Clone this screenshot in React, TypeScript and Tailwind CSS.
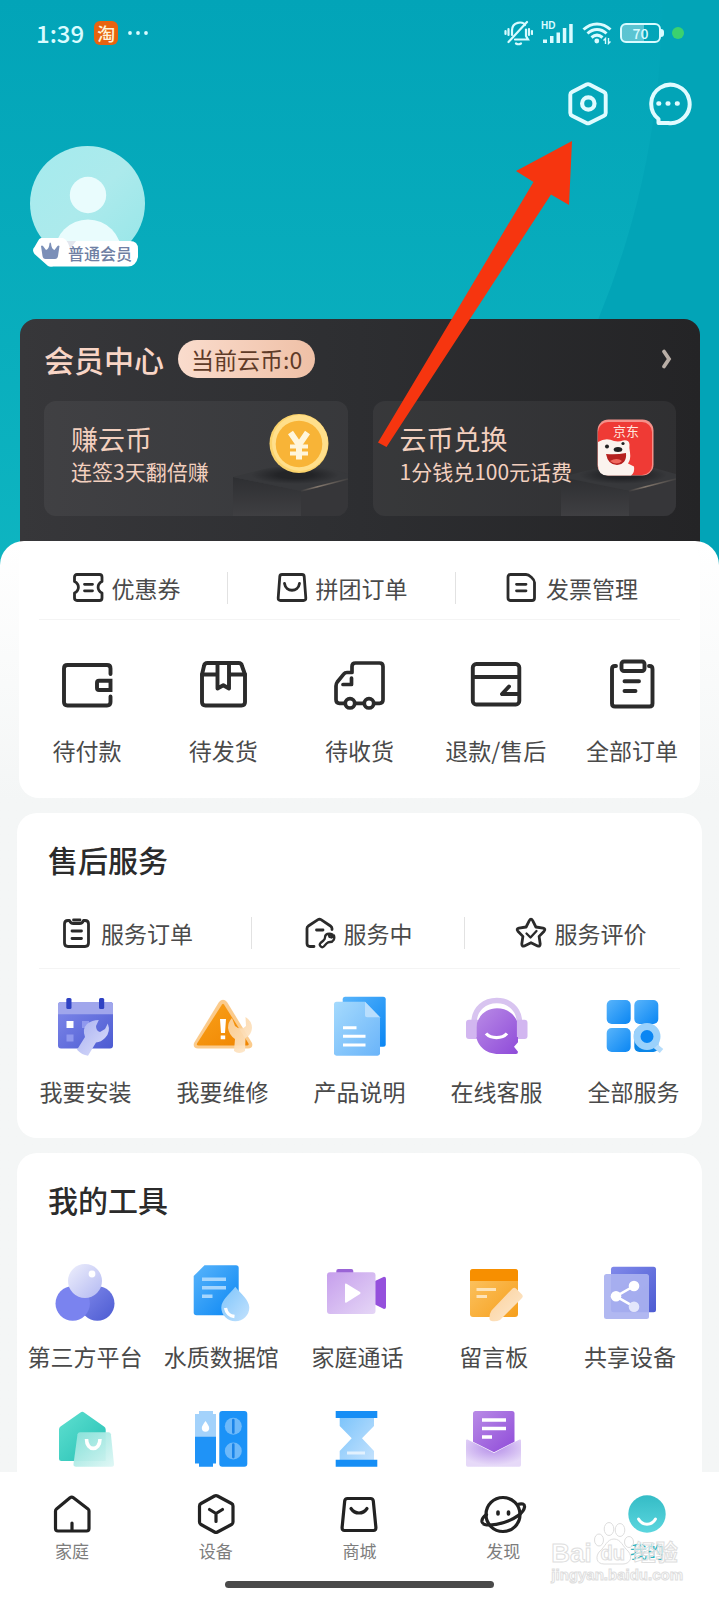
import type { ReactNode } from "react";

type Item = { label: string; icon: ReactNode };

/* ---------- 线性图标 ---------- */

function Line({ size, width, children }: { size: number; width: number; children: ReactNode }) {
  return (
    <svg
      width={size}
      height={size}
      viewBox={`0 0 ${size} ${size}`}
      fill="none"
      stroke="currentColor"
      strokeWidth={width}
      strokeLinecap="round"
      strokeLinejoin="round"
      aria-hidden="true"
    >
      {children}
    </svg>
  );
}

const orderLinks: Item[] = [
  {
    label: "优惠券",
    icon: (
      <Line size={32} width={2.8}>
        <path d="M5 2.5h22.5q2.5 0 2.5 2.5v4.6c-5.2 2.6-5.2 8.900 0 11.500V26q0 2.500-2.500 2.500H5Q2.500 28.500 2.500 26v-4.900c5.200-2.600 5.200-8.900 0-11.500V5Q2.500 2.500 5 2.500z" />
        <path d="M12.500 12.300h8M12.500 18.800h8" />
      </Line>
    ),
  },
  {
    label: "拼团订单",
    icon: (
      <Line size={32} width={2.8}>
        <path d="M6 2.500h20q2 0 2.200 2l1.600 21.500q.1 2.500-2.300 2.500H4.500q-2.400 0-2.300-2.500L3.800 4.500q.2-2 2.200-2z" />
        <path d="M8.500 11.500c1.500 9 13.500 9 15 0" />
      </Line>
    ),
  },
  {
    label: "发票管理",
    icon: (
      <Line size={32} width={2.8}>
        <path d="M4.500 2.500h15.500c3 0 8.500 4.500 8.500 8V26q0 2.500-2.500 2.500H4.500Q2 28.500 2 26V5q0-2.500 2.500-2.500z" />
        <path d="M10.500 12.300h9.500M10.500 18.800h9.500" />
      </Line>
    ),
  },
];

const orderStates: Item[] = [
  {
    label: "待付款",
    icon: (
      <Line size={56} width={3.9}>
        <path d="M51.500 18V12.500q0-3.500-3.500-3.500H8.500Q5 9 5 12.500v33.500q0 3.500 3.500 3.500H48q3.500 0 3.500-3.500v-5.500" />
        <path d="M51.500 24.800H40q-2 0-2 2V32q0 2 2 2h11.500z" strokeLinejoin="miter" />
      </Line>
    ),
  },
  {
    label: "待发货",
    icon: (
      <Line size={56} width={3.9}>
        <path d="M12.500 7h31q3 0 3.500 3l3 8.500V46q0 3.500-3.500 3.500h-36Q7 49.500 7 46V18.500L9 10q.5-3 3.500-3z" />
        <path d="M7 18.500h15.500M34 18.500h16M22.500 7v25.500l5.800-3.300 5.700 3.300V7" />
      </Line>
    ),
  },
  {
    label: "待收货",
    icon: (
      <Line size={56} width={3.7}>
        <path d="M25 47.300h7.500M43.500 47.300H48.500q3.500 0 3.500-3.500V10.500Q52 7 48.500 7h-24Q21 7 21 10.500V16.500h-5q-2 0-3.300 1.700L6.300 26Q5 27.700 5 30v13.500q0 3.800 3.500 3.800h4.500" />
        <circle cx="19" cy="47.300" r="4.700" />
        <circle cx="38" cy="47.300" r="4.700" />
        <path d="M20.500 22v6.500h-8.500" />
      </Line>
    ),
  },
  {
    label: "退款/售后",
    icon: (
      <Line size={56} width={3.9}>
        <rect x="4.800" y="8" width="46.500" height="40.500" rx="3.500" />
        <path d="M5 21h46M41 30.500L34 38h17" />
      </Line>
    ),
  },
  {
    label: "全部订单",
    icon: (
      <Line size={56} width={3.9}>
        <path d="M12 10H11Q8 10 8 13v34.500Q8 50.500 11 50.500h34.500q3 0 3-3V13q0-3-3-3H45" />
        <rect x="17.500" y="5.500" width="23" height="9.500" rx="2.500" />
        <path d="M20.500 25.300h14.500M20.500 35h11" />
      </Line>
    ),
  },
];

const serviceLinks: Item[] = [
  {
    label: "服务订单",
    icon: (
      <Line size={32} width={2.8}>
        <path d="M8.500 3.500H7Q3.500 3.500 3.500 7v19q0 3.500 3.500 3.500h17q3.500 0 3.500-3.500V7q0-3.500-3.500-3.500h-1.500c-1 3-2.500 3-4 3h-6c-1.500 0-3 0-4-3z" />
        <path d="M12.500 3h6.500M11 14h9.500M11 21.500h9.500" />
      </Line>
    ),
  },
  {
    label: "服务中",
    icon: (
      <Line size={32} width={2.8}>
        <path d="M10 29.500H6Q3 29.500 3 26.500V11.500Q3 10 4.300 9L14 2.700q1.500-1 3 0L26.500 9Q28 10 28 11.500V12.500M12.500 13h6.500" />
        <path d="M28.500 17.500c-3.500-2-7.500-.5-7.500 3 0 1.300-.5 2-1.500 3l-3 2.500c-2 2 1 5.500 3.300 3.500l2.700-3c1-1 2-1.500 3.500-1.500 3.500 0 5-3.500 4-6.500l-2.500 2-2-.500-.500-1.500z" strokeWidth="2.300" />
      </Line>
    ),
  },
  {
    label: "服务评价",
    icon: (
      <Line size={32} width={2.8}>
        <path d="M14.300 3.600q1.700-2.900 3.400 0l3.200 6.400 7.200 1.200q2.900.7 1 3l-5 5.200 1.100 7.500q.1 2.900-2.600 2l-6.600-3.200-6.600 3.200q-2.700.9-2.600-2l1.100-7.500-5-5.200q-1.900-2.300 1-3l7.200-1.200z" />
        <path d="M11.500 16.500l4 4 6-6.500" strokeWidth="2.300" />
      </Line>
    ),
  },
];

const tabs: Item[] = [
  {
    label: "家庭",
    icon: (
      <Line size={48} width={3.2}>
        <path d="M22 7.800q1.700-1.300 3.400 0L40 19q1 .8 1 2v17.500q0 2.500-2.500 2.500H10q-2.500 0-2.500-2.500V21q0-1.200 1-2z" />
        <path d="M24 33v7" />
      </Line>
    ),
  },
  {
    label: "设备",
    icon: (
      <Line size={48} width={3.2}>
        <path d="M22.500 6q1.500-.8 3 0L39.500 13.500q1.500.8 1.500 2.500v16q0 1.700-1.500 2.500L25.500 42q-1.500.8-3 0L9 34.500Q7.500 33.700 7.500 32V16q0-1.700 1.500-2.500z" />
        <path d="M17.500 19.500l6.500 4 6.500-4M24 23.500V31.500" />
      </Line>
    ),
  },
  {
    label: "商城",
    icon: (
      <Line size={48} width={3.2}>
        <path d="M12.500 8.500h23q2.500 0 2.800 2.500l2.600 26.500q.1 3-2.400 3H9.500q-2.500 0-2.400-3L9.700 11q.3-2.500 2.800-2.500z" />
        <path d="M16 18.500c4 6 12 6 16 0" />
      </Line>
    ),
  },
  {
    label: "发现",
    icon: (
      <Line size={48} width={3.2}>
        <circle cx="24" cy="24.500" r="17" />
        <path d="M38.500 14.500c4.500-1.500 7.500-.5 7 2.700-.8 5.800-10.500 12.300-20.500 15.300S4 36.300 3 32c-.5-3 1.500-5.300 4.500-7.300" />
        <path d="M19 22v2M29.500 22v2" strokeWidth="3.600" />
      </Line>
    ),
  },
  {
    label: "我的",
    icon: (
      <svg width="48" height="48" viewBox="0 0 48 48" aria-hidden="true">
        <defs>
          <linearGradient id="me" x1="0" y1="0" x2="0" y2="1">
            <stop offset="0" stopColor="#35bcc6" />
            <stop offset="1" stopColor="#5bd6de" />
          </linearGradient>
        </defs>
        <circle cx="24" cy="24" r="18.700" fill="url(#me)" />
        <path d="M15.500 29c4 7 13 7 17 0" fill="none" stroke="#fff" strokeWidth="3" strokeLinecap="round" />
      </svg>
    ),
  },
];

/* ---------- 彩色图标 ---------- */

function Color({ children }: { children: ReactNode }) {
  return (
    <svg width="64" height="64" viewBox="0 0 64 64" aria-hidden="true">
      {children}
    </svg>
  );
}

function Gradients() {
  const stops: [string, string, string][] = [
    ["indigo", "#8089ea", "#4c5bd2"],
    ["lilac", "#a9b1f0", "#dcdffb"],
    ["orange", "#f9a11b", "#f08500"],
    ["amber", "#fcc566", "#f69f1c"],
    ["peach", "#fbd09a", "#fde9cf"],
    ["blue", "#58b4fb", "#0a86f3"],
    ["sky", "#7cc4fb", "#c4e2fd"],
    ["page", "#a5dafd", "#6ab4f9"],
    ["violet", "#b98be6", "#8f4bd9"],
    ["mauve", "#c69fec", "#e5d6f6"],
    ["mint", "#5fe0d0", "#25bfb4"],
    ["foam", "#8ae2da", "#dff7f5"],
    ["pearl", "#eeeffc", "#b3b9f2"],
  ];
  return (
    <svg width="0" height="0" className="absolute" aria-hidden="true">
      <defs>
        {stops.map(([id, from, to]) => (
          <linearGradient key={id} id={id} x1="0" y1="0" x2="1" y2="1">
            <stop offset="0" stopColor={from} />
            <stop offset="1" stopColor={to} />
          </linearGradient>
        ))}
        <radialGradient id="glow" cx="0.5" cy="0.3" r="0.65">
          <stop offset="0" stopColor="#b48de8" />
          <stop offset="1" stopColor="#e6d9f8" />
        </radialGradient>
      </defs>
    </svg>
  );
}

const services: Item[] = [
  {
    label: "我要安装",
    icon: (
      <Color>
        <rect x="4" y="7" width="55" height="46.500" rx="3" fill="url(#indigo)" />
        <path d="M7 7h49q3 0 3 3v9.300H4V10q0-3 3-3z" fill="#a0a6ec" />
        <rect x="12.300" y="3" width="5.200" height="11" rx="1.500" fill="#2f42c3" />
        <rect x="45" y="3" width="5.200" height="11" rx="1.500" fill="#2f42c3" />
        <path d="M12.500 26h7v7h-7z" fill="#fff" />
        <path d="M28 26h7v7h-7zM12.500 39.500h7v7h-7z" fill="#8f98ee" />
        <path
          d="M44.800 25L42 31q0 5 4 6l5-3 2.800-5.500Q57 37 51 43q-4 4-9 4.500L34 60.700Q28 60 23 54.700L31 42q-3-8 2-13 5-4 11.800-4z"
          fill="url(#lilac)"
        />
      </Color>
    ),
  },
  {
    label: "我要维修",
    icon: (
      <Color>
        <path d="M28 7q4-4.500 8 0l25 41q1.500 5.500-4 5.500H7q-5.500 0-4-5.500z" fill="#fbcb8c" />
        <path d="M31 9.500q1-1.300 2 0l24.500 39q.5 2-1.500 2H7.500q-2 0-1.500-2z" fill="url(#orange)" />
        <path d="M29 24h6l-1 14h-4zM29.700 40.500h4.500v3.700h-4.500z" fill="#fff" />
        <path
          d="M41 23q-4 4-4 10 1 7 7 11l-1 12q5 4 11 0l.5-13q6-3 6.500-10 0-7-6.500-11l.5 9q-5 5-11 0z"
          fill="url(#peach)"
          opacity="0.93"
        />
      </Color>
    ),
  },
  {
    label: "产品说明",
    icon: (
      <Color>
        <rect x="14.700" y="1.700" width="43" height="50" rx="2.500" fill="url(#blue)" />
        <path d="M8.500 6.700H37l15 15.600v36q0 2.400-2.500 2.400h-41Q6 60.700 6 58.300V9.200q0-2.500 2.500-2.500z" fill="url(#page)" />
        <path d="M37 6.700v13q0 2.600 2.500 2.600H52z" fill="#b9defd" />
        <path d="M15 32.700h13.500M15 41.300h22.500M15 50h22.500" stroke="#fff" strokeWidth="3" />
      </Color>
    ),
  },
  {
    label: "在线客服",
    icon: (
      <Color>
        <path d="M9 28C9-2 54.500-2 54.500 28" fill="none" stroke="#d8c4f0" strokeWidth="5.500" />
        <rect x="1" y="24.700" width="14" height="19.300" rx="3" fill="#d2b6f0" />
        <rect x="48.500" y="24.700" width="14" height="19.300" rx="3" fill="#d2b6f0" />
        <path d="M32 13.300c12 0 21 8 21 20v14l-4 4.500 4 5q0 2.200-2 2.200H34c-14 0-23.300-9-23.300-22.500 0-14 9.300-23.200 21.300-23.200z" fill="url(#violet)" />
        <path d="M10.700 27v15M52.900 27v15" stroke="#d2b6f0" strokeWidth="2" />
        <path d="M21 38.500c5 5.500 16 5.500 21 0" fill="none" stroke="#fff" strokeWidth="3.300" />
      </Color>
    ),
  },
  {
    label: "全部服务",
    icon: (
      <Color>
        <rect x="4.700" y="5" width="24" height="24" rx="5" fill="url(#blue)" />
        <rect x="32.300" y="5" width="24" height="24" rx="5" fill="url(#blue)" />
        <rect x="4.700" y="33" width="24" height="24" rx="5" fill="url(#blue)" />
        <rect x="32.300" y="33" width="24" height="24" rx="5" fill="#0a86e8" />
        <path d="M51 49l8.500 7" stroke="#b5dcfb" strokeWidth="5.500" />
        <circle cx="45" cy="41.500" r="10" fill="#0a86f3" stroke="#9ad1fb" strokeWidth="7" />
      </Color>
    ),
  },
];

const tools: Item[] = [
  {
    label: "第三方平台",
    icon: (
      <Color>
        <circle cx="44.300" cy="43.500" r="17.200" fill="url(#indigo)" />
        <circle cx="19.700" cy="43.500" r="17.200" fill="#7a83ef" />
        <circle cx="32" cy="21" r="17" fill="url(#pearl)" />
        <circle cx="39" cy="14" r="3.400" fill="#fff" />
      </Color>
    ),
  },
  {
    label: "水质数据馆",
    icon: (
      <Color>
        <path d="M15.500 5.300H47q2.700 0 2.700 2.700v44.500q0 2.800-2.700 2.800H7.500q-2.800 0-2.800-2.800V16z" fill="url(#blue)" />
        <path d="M13 19.300h24M13 27.700h24M13 36.300h10.500" stroke="#a6d6fd" strokeWidth="3.600" />
        <path d="M46.300 26.700C52 34 60.300 40 60.300 47.500a14 13.700 0 0 1-28 0c0-7.500 8.500-13.500 14-20.800z" fill="url(#sky)" />
        <path d="M36.500 48c1 5 4 8 9 8.500" fill="none" stroke="#fff" strokeWidth="3.300" />
      </Color>
    ),
  },
  {
    label: "家庭通话",
    icon: (
      <Color>
        <rect x="11.300" y="9" width="17" height="6" rx="2" fill="#9a64d6" />
        <path d="M50 21l9-4.300q2 0 2 2V47q0 2-2 2l-9-4.500z" fill="#9550dc" />
        <rect x="2" y="12.300" width="48.500" height="41.700" rx="3" fill="url(#mauve)" />
        <path d="M20 24.500q0-1.500 1.500-.7L35 32q1.200 1 0 2L21.500 42.500q-1.500.7-1.500-1z" fill="#fff" />
      </Color>
    ),
  },
  {
    label: "留言板",
    icon: (
      <Color>
        <rect x="8" y="9" width="48" height="48" rx="3" fill="url(#amber)" />
        <path d="M11 9h42q3 0 3 3v9H8v-9q0-3 3-3z" fill="#f78f00" />
        <path d="M14.500 29.500h19.500M14.500 36.500h10.500" stroke="#fde3b8" strokeWidth="3.200" />
        <path d="M50.500 28.500q1.800-1.600 3.500 0l6 6q1.500 1.800 0 3.500L38 60q-4 2-8.500 1-2.500-.5-2-3.500 0-4 2-7z" fill="url(#peach)" />
      </Color>
    ),
  },
  {
    label: "共享设备",
    icon: (
      <Color>
        <rect x="13" y="6.700" width="45" height="45.500" rx="2.500" fill="url(#indigo)" />
        <rect x="6" y="14" width="45" height="45" rx="2.500" fill="#aab2f0" opacity="0.92" />
        <path d="M18 36.300L36 26M18 36.300l18 10.400" stroke="#fff" strokeWidth="2.500" />
        <circle cx="36" cy="26" r="5.300" fill="#fff" />
        <circle cx="18" cy="36.300" r="5.300" fill="#fff" />
        <circle cx="36" cy="46.700" r="5.300" fill="#e3e6fb" />
      </Color>
    ),
  },
];

const moreTools: Item[] = [
  {
    label: "智家商城",
    icon: (
      <Color>
        <path d="M27.500 5.500q1.800-1.500 3.600 0L51 19.500q1.700 1.200 1.700 3V54H8.500Q6 54 6 51.500V22.500q0-2 1.500-3z" fill="url(#mint)" />
        <path d="M27 25.300h28.500q2 0 2.400 2L61 57q.2 2.700-2.300 2.700H23q-2.800 0-2.500-2.700L24.500 27.300q.5-2 2.500-2z" fill="url(#foam)" opacity="0.95" />
        <path d="M33.500 32c0 12.500 13.500 12.500 13.500 0" fill="none" stroke="#fff" strokeWidth="3.600" />
      </Color>
    ),
  },
  {
    label: "滤芯管理",
    icon: (
      <Color>
        <path d="M10 4h14v3h3v23H6V7h4z" fill="#a3d2fb" />
        <path d="M6 29.700h21V56.500h-3v3.200H10V56.500H6z" fill="#1f93f7" />
        <path d="M16.500 14c2 3 3.700 5 3.700 7a3.700 3.700 0 0 1-7.400 0c0-2 1.700-4 3.700-7z" fill="#fff" />
        <rect x="30.300" y="4" width="28" height="55.700" rx="3" fill="#1b92f7" />
        <circle cx="44.300" cy="19.300" r="8.500" fill="#6db9fa" />
        <circle cx="44.300" cy="43.900" r="8.500" fill="#6db9fa" />
        <path d="M44.300 13v12.500M44.300 37.600v12.500" stroke="#1b84e8" strokeWidth="2.600" strokeLinecap="round" />
      </Color>
    ),
  },
  {
    label: "使用时长",
    icon: (
      <Color>
        <path d="M14.700 10H49v9L37 31.300 49 44v9H14.700v-9l12-12.700L14.700 19z" fill="url(#sky)" />
        <path d="M22 46h18" stroke="#e2f1fe" strokeWidth="3" />
        <path d="M10.700 4h41.600v7H10.700zM10.700 52.700h41.600v7H10.700z" fill="#168ef5" />
      </Color>
    ),
  },
  {
    label: "消息订阅",
    icon: (
      <Color>
        <path d="M4 33.500q0-1.500 1.500-1L32 46l25.500-13.500q1.500-.5 1.500 1V58q0 1.700-1.700 1.700H5.700Q4 59.700 4 58z" fill="url(#glow)" />
        <path d="M13.500 4H50q2.500 0 2.500 2.500V34.700L32 45.300 11 34.700V6.500Q11 4 13.500 4z" fill="url(#violet)" />
        <path d="M20 13h24M20 21.500h24M20 30h10" stroke="#fff" strokeWidth="3.600" />
      </Color>
    ),
  },
];

/* ---------- 头部 ---------- */

function Backdrop() {
  return (
    <svg
      className="absolute left-0 top-0 h-[580px] w-full"
      viewBox="0 0 719 580"
      preserveAspectRatio="none"
      aria-hidden="true"
    >
      <defs>
        <linearGradient id="tide" x1="0" y1="0" x2="0" y2="580" gradientUnits="userSpaceOnUse">
          <stop offset="0" stopColor="#02a4b8" />
          <stop offset="1" stopColor="#0eb5c1" />
        </linearGradient>
      </defs>
      <rect width="719" height="580" fill="#02a4b7" />
      <circle cx="-168" cy="0" r="830" fill="url(#tide)" />
    </svg>
  );
}

function StatusBar() {
  return (
    <div className="flex h-[66px] items-center justify-between pl-9 pr-[35px] text-[#d9fbff]">
      <div className="flex items-center gap-[10px]">
        <span className="text-[24px] font-medium leading-8">1:39</span>
        <span className="flex size-6 items-center justify-center rounded-md bg-[#e8630f] text-[18px] font-medium leading-6 text-[#fff3d8]">
          淘
        </span>
        <svg width="20" height="6" viewBox="0 0 20 6" fill="currentColor" aria-hidden="true">
          <circle cx="2" cy="3" r="1.900" />
          <circle cx="10" cy="3" r="1.900" />
          <circle cx="18" cy="3" r="1.900" />
        </svg>
      </div>
      <div className="flex items-center gap-2">
        <svg width="29" height="26" viewBox="0 0 29 26" fill="none" stroke="currentColor" strokeWidth="2.200" strokeLinecap="round" aria-hidden="true">
          <path d="M8 15V10.500C8 1.500 19 1 21 5M22 9.500V16l2 3.500H11M12 23.500q2.500 1.500 5 0M23 2L4.500 22M1.500 11v3M4.500 9v6M25 9v6M28 11v3" />
        </svg>
        <svg width="33" height="24" viewBox="0 0 33 24" fill="currentColor" aria-hidden="true">
          <text x="0" y="8" fontSize="10" fontWeight="700" fontFamily="Liberation Sans, sans-serif">HD</text>
          <path d="M2 18.500h4V22H2zM9 15h3.500v7H9zM15.500 11.500h3.500V22h-3.500zM21.800 7h3.500v15h-3.500zM28.200 3h3.500v19h-3.500z" />
        </svg>
        <svg width="30" height="24" viewBox="0 0 30 24" fill="none" stroke="currentColor" strokeWidth="3" aria-hidden="true">
          <path d="M1.500 8.500c8-7.500 19-7.500 27 0M5.500 12.500c5.700-5.300 13.300-5.300 19 0M9.500 16.500c3.500-3 7.500-3 11 0" />
          <circle cx="14.800" cy="20" r="2.400" fill="currentColor" stroke="none" />
          <path d="M23.500 23v-5.500l-2 2M26.500 17v5.500l2-2" strokeWidth="1.400" />
        </svg>
        <span className="flex items-center">
          <span className="flex h-5 w-[41px] items-center justify-center rounded-md border-2 border-current bg-gradient-to-r from-white/35 from-60% to-transparent to-60% text-[14px] font-medium leading-4">
            70
          </span>
          <span className="h-2 w-[3px] rounded-r-sm bg-current" />
        </span>
        <span className="size-3 rounded-full bg-[#3bd16f]" />
      </div>
    </div>
  );
}

function Profile() {
  return (
    <div className="ml-[30px] mt-[18px] flex h-[122px] w-[116px] flex-col">
      <svg width="115" height="115" viewBox="0 0 115 115" aria-label="头像" role="img">
        <defs>
          <linearGradient id="face" x1="0" y1="0" x2="1" y2="1">
            <stop offset="0" stopColor="#a5ebee" />
            <stop offset="0.500" stopColor="#aceaec" />
            <stop offset="1" stopColor="#96e6e8" />
          </linearGradient>
          <clipPath id="round">
            <circle cx="57.500" cy="57.500" r="57.500" />
          </clipPath>
        </defs>
        <g clipPath="url(#round)">
          <rect width="115" height="115" fill="url(#face)" />
          <circle cx="58" cy="49" r="18.200" fill="#e9fcfd" />
          <circle cx="58" cy="107" r="33.500" fill="#e9fcfd" />
        </g>
      </svg>
      <div className="relative -mt-[23px] ml-[3px] flex h-[29px] w-[105px] items-center">
        <svg className="absolute inset-0" width="105" height="29" viewBox="0 0 105 29" aria-hidden="true">
          <path d="M30 3h67q8 0 8 8v8q-2 9.500-10 9.500H18z" fill="#fff" />
          <path d="M32 3l11 0-9 12z" fill="#e2e6ee" />
          <path d="M8 0h22q3 1 5 5l3 8q0 3-2 5l-14 9q-4 3-7 1L1.500 16q-3-4 0-7L5 3q1-2.500 3-3z" fill="#fff" />
          <path d="M8 8q1-1 2 0l3 4q3-1 3.500-6.500.5-2 1.500 0Q18.500 11 21.500 12l3-4q1-1 2 0L25 18q-.5 3-3 3h-9.500q-2.500 0-3-3z" fill="#7b8fb8" />
        </svg>
        <span className="relative pl-[35px] text-[16px] font-medium leading-5 whitespace-nowrap text-[#6f7fa3]">普通会员</span>
      </div>
    </div>
  );
}

function Pedestal({ children }: { children: ReactNode }) {
  return (
    <svg className="absolute right-0 top-0" width="115" height="115" viewBox="0 0 115 115" aria-hidden="true">
      <defs>
        <linearGradient id="boxFront" x1="0" y1="0" x2="0" y2="1">
          <stop offset="0" stopColor="#2e2f32" />
          <stop offset="1" stopColor="#3f3f42" />
        </linearGradient>
        <linearGradient id="boxEdge" x1="0" y1="0" x2="1" y2="0">
          <stop offset="0" stopColor="#3a3a3c" />
          <stop offset="0.350" stopColor="#85796e" />
          <stop offset="1" stopColor="#403f40" />
        </linearGradient>
        <radialGradient id="boxShade">
          <stop offset="0.400" stopColor="#232427" />
          <stop offset="1" stopColor="#232427" stopOpacity="0" />
        </radialGradient>
      </defs>
      <path d="M0 76l68 14v25H0z" fill="url(#boxFront)" />
      <path d="M68 90l47-12v37H68z" fill="#363639" />
      <path d="M0 76l40-10h50l25 7v5L68 90z" fill="#37383b" />
      <path d="M68 90l47-12" stroke="url(#boxEdge)" strokeWidth="1.500" />
      <ellipse cx="62" cy="74" rx="44" ry="9" fill="url(#boxShade)" />
      {children}
    </svg>
  );
}

function Coin() {
  return (
    <>
      <circle cx="66" cy="42.500" r="29.500" fill="#fbd36c" />
      <circle cx="67" cy="42" r="28" fill="#ffdf8b" />
      <circle cx="66" cy="43" r="23.300" fill="#f8b437" />
      <path d="M57.500 31.500l8.500 12.500 8.500-12.500M66 43v15.500" stroke="#fff6dc" strokeWidth="6" fill="none" />
      <path d="M57 45.500h18M57 52.500h18" stroke="#fff6dc" strokeWidth="4" fill="none" />
    </>
  );
}

function JdBadge() {
  return (
    <>
      <rect x="36.500" y="18.500" width="56" height="56" rx="11" fill="#f5918a" />
      <rect x="37" y="21" width="54" height="53" rx="10" fill="#ef3a35" />
      <path d="M37 41q8-5 16-1 5 1 9-.5 6-1 6.500 4-.5 3 .5 8 1 7-2 11l6 3q1 6-3 9H47q-10 0-10-10z" fill="#fbf3ee" />
      <path d="M45 53q10 1 20-1 1 11-9 12-9 0-11-11z" fill="#b6211f" />
      <path d="M49 60q7-4 12 0-5 5-12 0z" fill="#f0685d" />
      <ellipse cx="57" cy="48.500" rx="4.300" ry="2.500" fill="#222" />
      <circle cx="46" cy="45.500" r="2" fill="#222" />
      <circle cx="62" cy="42.500" r="1.600" fill="#222" />
      <text x="52" y="34.500" fontSize="13" fill="#ffe7df" fontFamily="Noto Sans CJK SC, sans-serif">京东</text>
    </>
  );
}

function Perk({ title, text, children }: { title: string; text: string; children: ReactNode }) {
  return (
    <button
      type="button"
      className="relative flex h-[115px] flex-1 flex-col overflow-hidden rounded-xl bg-white/5 pl-[27px] pt-5 text-left text-[#f3d0bf]"
    >
      <Pedestal>{children}</Pedestal>
      <span className="relative text-[27px] leading-9">{title}</span>
      <span className="relative text-[21px] leading-7 whitespace-nowrap">{text}</span>
    </button>
  );
}

function MemberCard() {
  return (
    <section className="ml-5 mr-[19px] mt-[51px] h-[246px] rounded-t-2xl bg-gradient-to-r from-[#37373a] via-[#2d2e31] to-[#242426] px-6 pt-5">
      <div className="flex h-10 items-center">
        <h2 className="text-[30px] font-medium leading-10 text-[#f8d5c6]">会员中心</h2>
        <span className="ml-[14px] rounded-full bg-gradient-to-r from-[#fadccd] to-[#efc0a6] px-[13px] text-[23px] leading-[38px] text-[#5f3b28]">
          当前云币:0
        </span>
        <button type="button" aria-label="进入会员中心" className="ml-auto pr-1">
          <svg width="12" height="22" viewBox="0 0 12 22" fill="none" stroke="#b9aea6" strokeWidth="3.800" strokeLinecap="round" aria-hidden="true">
            <path d="M4 3.500L9 11l-5 7.500" />
          </svg>
        </button>
      </div>
      <div className="mt-[22px] flex gap-[25px]">
        <Perk title="赚云币" text="连签3天翻倍赚">
          <Coin />
        </Perk>
        <Perk title="云币兑换" text="1分钱兑100元话费">
          <JdBadge />
        </Perk>
      </div>
    </section>
  );
}

/* ---------- 列表区 ---------- */

function LinkRow({ items, className }: { items: Item[]; className: string }) {
  return (
    <div className={`grid items-center ${className}`}>
      {items.map((item, i) => (
        <button
          key={item.label}
          type="button"
          className={`flex h-8 items-center justify-center gap-2 text-[23px] text-[#4a4a4a] ${
            i > 0 ? "border-l border-[#e2e2e2]" : ""
          }`}
        >
          <span className="text-[#2b2b2b]">{item.icon}</span>
          <span className="leading-8 whitespace-nowrap">{item.label}</span>
        </button>
      ))}
    </div>
  );
}

function IconGrid({ items, gap }: { items: Item[]; gap: string }) {
  return (
    <div className="grid grid-cols-5">
      {items.map((item) => (
        <button key={item.label} type="button" className={`flex flex-col items-center text-[#2b2b2b] ${gap}`}>
          {item.icon}
          <span className="text-[23px] leading-8 whitespace-nowrap text-[#4a4a4a]">{item.label}</span>
        </button>
      ))}
    </div>
  );
}

function Watermark() {
  return (
    <div
      aria-hidden="true"
      className="pointer-events-none absolute bottom-[17px] right-9 font-['Liberation_Sans','Noto_Sans_CJK_SC',sans-serif] text-white/60 [-webkit-text-stroke:1px_#dedede]"
    >
      <svg className="absolute left-[42px] top-[-18px]" width="42" height="44" viewBox="0 0 42 44" fill="#fff" fillOpacity="0.600" stroke="#dedede">
        <ellipse cx="6" cy="19" rx="4.500" ry="6" />
        <ellipse cx="16" cy="8" rx="4.800" ry="6.500" />
        <ellipse cx="27" cy="9" rx="4.800" ry="6.500" />
        <ellipse cx="36" cy="21" rx="4.500" ry="5.500" />
        <path d="M21 18c7 0 9 8 14 12 6 7 1 13-5 13H11c-8 0-9-8-4-13 5-4 7-12 14-12z" />
      </svg>
      <div className="relative flex items-center text-[26px] font-bold leading-7">
        <span>Bai</span>
        <span className="w-[42px] text-center text-[20px]">du</span>
        <span className="text-[22px]">经验</span>
      </div>
      <div className="text-[15px] font-bold leading-4">jingyan.baidu.com</div>
    </div>
  );
}

function TabBar() {
  return (
    <nav className="relative bg-white pb-3 pt-[18px]">
      <div className="grid grid-cols-5">
        {tabs.map((tab) => (
          <a key={tab.label} href="#" className="flex flex-col items-center gap-[3px] text-[#222]">
            {tab.icon}
            <span className={`text-[17px] leading-5 ${tab.label === "我的" ? "text-[#2fb3bd]" : "text-[#7d7d7d]"}`}>
              {tab.label}
            </span>
          </a>
        ))}
      </div>
      <Watermark />
      <div className="mx-auto mt-5 h-[7px] w-3/8 rounded-full bg-[#4a4a4a]" />
    </nav>
  );
}

export default function App() {
  return (
    <main className="relative flex min-h-screen flex-col overflow-hidden bg-[#f4f6f6] font-['Noto_Sans_CJK_SC','Noto_Sans',sans-serif]">
      <Gradients />
      <Backdrop />

      <header className="relative">
        <StatusBar />
        <div className="mt-[14px] flex justify-end gap-8 pr-[27px] text-[#e0fbff]">
          <button type="button" aria-label="设置">
            <Line size={48} width={4.200}>
              <path d="M22.500 4.500q1.500-.8 3 0L40 12q1.700.9 1.700 2.700V33q0 1.800-1.700 2.700L25.500 43q-1.500.8-3 0L8 35.700Q6.300 34.800 6.300 33V14.700Q6.300 12.900 8 12z" strokeWidth="3.900" />
              <circle cx="24.300" cy="23.500" r="6.200" />
            </Line>
          </button>
          <button type="button" aria-label="消息">
            <Line size={48} width={4}>
              <path d="M14.500 43V39A19.200 19.200 0 1 1 24 43z" />
              <path d="M14.500 23.500h.6M23.700 23.500h.6M33 23.500h.6" strokeWidth="4.600" />
            </Line>
          </button>
        </div>
        <Profile />
        <MemberCard />
      </header>

      <div className="relative -mt-6 flex flex-1 flex-col rounded-t-[24px] bg-gradient-to-b from-white to-[#f4f6f6] to-[260px]">
        <section className="mx-[19px] rounded-[20px] bg-white pb-8 pt-[15px]">
          <div className="mx-5 border-b border-[#f4f4f4]">
            <LinkRow
              items={orderLinks}
              className="h-[63px] grid-cols-[188fr_228fr_225fr] [&>:first-child]:pr-[14px] [&>:last-child]:pl-2"
            />
          </div>
          <div className="pt-9">
            <IconGrid items={orderStates} gap="gap-[22px]" />
          </div>
        </section>

        <section className="mx-[17px] mt-[15px] rounded-[20px] bg-white pb-[31px] pt-[26px]">
          <h2 className="px-[31px] text-[30px] font-medium leading-10 text-[#2b2b2b]">售后服务</h2>
          <div className="mx-[22px] mt-[18px] border-b border-[#f4f4f4]">
            <LinkRow
              items={serviceLinks}
              className="h-[71px] grid-cols-[212fr_213fr_216fr] [&>:first-child]:pr-9 [&>:last-child]:pl-4"
            />
          </div>
          <div className="pt-[26px]">
            <IconGrid items={services} gap="gap-4" />
          </div>
        </section>

        <section className="mx-[17px] mt-[15px] flex-1 rounded-t-[20px] bg-white pr-1 pt-[26px]">
          <h2 className="px-[31px] text-[30px] font-medium leading-10 text-[#2b2b2b]">我的工具</h2>
          <div className="pt-[41px]">
            <IconGrid items={tools} gap="gap-4" />
          </div>
          <div className="grid grid-cols-5 pt-[35px]">
            {moreTools.map((tool) => (
              <button key={tool.label} type="button" aria-label={tool.label} className="flex justify-center">
                {tool.icon}
              </button>
            ))}
          </div>
        </section>
      </div>

      <TabBar />

      {/* 指向设置按钮的箭头 */}
      <svg className="pointer-events-none absolute right-[147px] top-[141px]" width="194" height="306" viewBox="0 0 194 306" aria-hidden="true">
        <path d="M194 0l-56 30 17.500 11L0 301.500l8.500 4.500L173 53.500 191 64z" fill="#f6350f" />
      </svg>
    </main>
  );
}
